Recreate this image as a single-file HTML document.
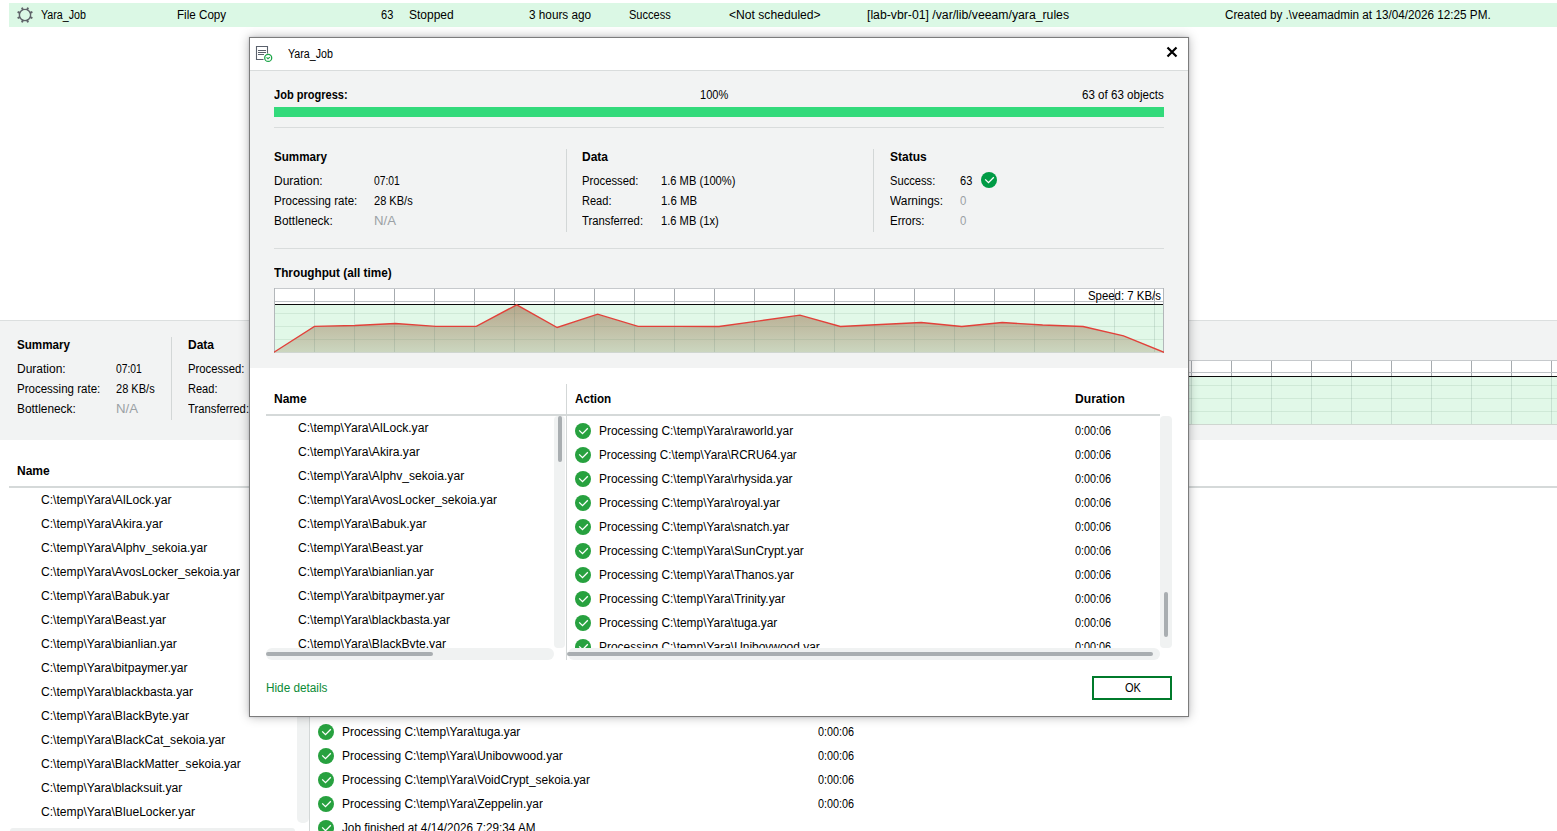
<!DOCTYPE html>
<html><head><meta charset="utf-8"><title>Yara_Job</title>
<style>
html,body{margin:0;padding:0;width:1557px;height:831px;overflow:hidden;background:#fff;position:relative}
body{font-family:"Liberation Sans",sans-serif;font-size:12px;color:#000}
.t,.tb{position:absolute;line-height:14px;white-space:pre;font-size:12px;transform-origin:0 0}
.tb{font-weight:bold}
.r,.a{position:absolute}
.clip{position:absolute;overflow:hidden}
.dlg{position:absolute;left:249px;top:37px;width:938px;height:678px;border:1px solid #7c7c7c;background:#fff;
 box-shadow:0 0 2px rgba(50,60,90,0.2),0 0 10px rgba(0,0,0,0.28)}
</style></head><body>
<div class="r" style="left:9px;top:3px;width:1548px;height:24px;background:#dbf8e5;"></div>
<svg class="a" style="left:17px;top:7px" width="16" height="16" viewBox="0 0 16 16"><circle cx="8" cy="8" r="5.6" fill="none" stroke="#5f6369" stroke-width="1.4"/><line x1="12.80" y1="9.99" x2="15.39" y2="11.06" stroke="#5f6369" stroke-width="2"/><line x1="9.99" y1="12.80" x2="11.06" y2="15.39" stroke="#5f6369" stroke-width="2"/><line x1="6.01" y1="12.80" x2="4.94" y2="15.39" stroke="#5f6369" stroke-width="2"/><line x1="3.20" y1="9.99" x2="0.61" y2="11.06" stroke="#5f6369" stroke-width="2"/><line x1="3.20" y1="6.01" x2="0.61" y2="4.94" stroke="#5f6369" stroke-width="2"/><line x1="6.01" y1="3.20" x2="4.94" y2="0.61" stroke="#5f6369" stroke-width="2"/><line x1="9.99" y1="3.20" x2="11.06" y2="0.61" stroke="#5f6369" stroke-width="2"/><line x1="12.80" y1="6.01" x2="15.39" y2="4.94" stroke="#5f6369" stroke-width="2"/></svg>
<div class="t" style="left:41px;top:8px;transform:scaleX(0.89);">Yara_Job</div>
<div class="t" style="left:177px;top:8px;transform:scaleX(0.97);">File Copy</div>
<div class="t" style="left:381px;top:8px;transform:scaleX(0.92);">63</div>
<div class="t" style="left:409px;top:8px;">Stopped</div>
<div class="t" style="left:529px;top:8px;transform:scaleX(0.98);">3 hours ago</div>
<div class="t" style="left:629px;top:8px;transform:scaleX(0.92);">Success</div>
<div class="t" style="left:729px;top:8px;transform:scaleX(1.01);">&lt;Not scheduled&gt;</div>
<div class="t" style="left:867px;top:8px;transform:scaleX(1.02);">[lab-vbr-01] /var/lib/veeam/yara_rules</div>
<div class="t" style="left:1225px;top:8px;transform:scaleX(0.976);">Created by .\veeamadmin at 13/04/2026 12:25 PM.</div>
<div class="r" style="left:0px;top:320px;width:1557px;height:1px;background:#dcdfdf;"></div>
<div class="r" style="left:0px;top:321px;width:1557px;height:119px;background:#f2f3f3;"></div>
<div class="tb" style="left:17px;top:338px;transform:scaleX(0.97);">Summary</div>
<div class="t" style="left:17px;top:362px;">Duration:</div>
<div class="t" style="left:116px;top:362px;transform:scaleX(0.86);">07:01</div>
<div class="t" style="left:17px;top:382px;transform:scaleX(0.96);">Processing rate:</div>
<div class="t" style="left:116px;top:382px;transform:scaleX(0.92);">28 KB/s</div>
<div class="t" style="left:17px;top:402px;transform:scaleX(0.99);">Bottleneck:</div>
<div class="t" style="left:116px;top:402px;transform:scaleX(1.1);color:#9ba1a5">N/A</div>
<div class="r" style="left:171px;top:337px;width:1px;height:83px;background:#d3d7d7;"></div>
<div class="tb" style="left:188px;top:338px;">Data</div>
<div class="t" style="left:188px;top:362px;transform:scaleX(0.94);">Processed:</div>
<div class="t" style="left:188px;top:382px;transform:scaleX(0.92);">Read:</div>
<div class="t" style="left:188px;top:402px;transform:scaleX(0.94);">Transferred:</div>
<svg class="a" style="left:1151px;top:360px" width="407" height="65" viewBox="0 0 407 65"><rect x="0" y="0" width="407" height="17" fill="#ffffff"/><rect x="0" y="17" width="407" height="48" fill="#e1f8e8"/><rect x="0" y="25" width="407" height="1" fill="rgba(90,130,100,0.13)"/><rect x="0" y="38" width="407" height="1" fill="rgba(90,130,100,0.13)"/><rect x="0" y="51" width="407" height="1" fill="rgba(90,130,100,0.13)"/><rect x="40" y="0" width="1" height="17" fill="#a6abaf"/><rect x="40" y="17" width="1" height="48" fill="rgba(90,120,110,0.18)"/><rect x="80" y="0" width="1" height="17" fill="#a6abaf"/><rect x="80" y="17" width="1" height="48" fill="rgba(90,120,110,0.18)"/><rect x="120" y="0" width="1" height="17" fill="#a6abaf"/><rect x="120" y="17" width="1" height="48" fill="rgba(90,120,110,0.18)"/><rect x="160" y="0" width="1" height="17" fill="#a6abaf"/><rect x="160" y="17" width="1" height="48" fill="rgba(90,120,110,0.18)"/><rect x="200" y="0" width="1" height="17" fill="#a6abaf"/><rect x="200" y="17" width="1" height="48" fill="rgba(90,120,110,0.18)"/><rect x="240" y="0" width="1" height="17" fill="#a6abaf"/><rect x="240" y="17" width="1" height="48" fill="rgba(90,120,110,0.18)"/><rect x="280" y="0" width="1" height="17" fill="#a6abaf"/><rect x="280" y="17" width="1" height="48" fill="rgba(90,120,110,0.18)"/><rect x="320" y="0" width="1" height="17" fill="#a6abaf"/><rect x="320" y="17" width="1" height="48" fill="rgba(90,120,110,0.18)"/><rect x="360" y="0" width="1" height="17" fill="#a6abaf"/><rect x="360" y="17" width="1" height="48" fill="rgba(90,120,110,0.18)"/><rect x="400" y="0" width="1" height="17" fill="#a6abaf"/><rect x="400" y="17" width="1" height="48" fill="rgba(90,120,110,0.18)"/><rect x="0" y="0" width="407" height="1" fill="#c6c9cc"/><rect x="0" y="12" width="407" height="1" fill="#bfc3c7"/><rect x="0" y="16" width="407" height="1" fill="#0c0c0c"/><rect x="0" y="64" width="407" height="1" fill="#cfd6d0"/><rect x="0" y="0" width="1" height="65" fill="#b3b7ba"/><rect x="406" y="0" width="1" height="65" fill="#b3b7ba"/></svg>
<div class="tb" style="left:17px;top:464px;">Name</div>
<div class="r" style="left:9px;top:486px;width:1548px;height:2px;background:#d5d9d9;"></div>
<div class="t" style="left:41px;top:493px;transform:scaleX(1.01);">C:\temp\Yara\AlLock.yar</div>
<div class="t" style="left:41px;top:517px;transform:scaleX(1.01);">C:\temp\Yara\Akira.yar</div>
<div class="t" style="left:41px;top:541px;transform:scaleX(1.01);">C:\temp\Yara\Alphv_sekoia.yar</div>
<div class="t" style="left:41px;top:565px;transform:scaleX(1.01);">C:\temp\Yara\AvosLocker_sekoia.yar</div>
<div class="t" style="left:41px;top:589px;transform:scaleX(1.01);">C:\temp\Yara\Babuk.yar</div>
<div class="t" style="left:41px;top:613px;transform:scaleX(1.01);">C:\temp\Yara\Beast.yar</div>
<div class="t" style="left:41px;top:637px;transform:scaleX(1.01);">C:\temp\Yara\bianlian.yar</div>
<div class="t" style="left:41px;top:661px;transform:scaleX(1.01);">C:\temp\Yara\bitpaymer.yar</div>
<div class="t" style="left:41px;top:685px;transform:scaleX(1.01);">C:\temp\Yara\blackbasta.yar</div>
<div class="t" style="left:41px;top:709px;transform:scaleX(1.01);">C:\temp\Yara\BlackByte.yar</div>
<div class="t" style="left:41px;top:733px;transform:scaleX(1.01);">C:\temp\Yara\BlackCat_sekoia.yar</div>
<div class="t" style="left:41px;top:757px;transform:scaleX(1.01);">C:\temp\Yara\BlackMatter_sekoia.yar</div>
<div class="t" style="left:41px;top:781px;transform:scaleX(1.01);">C:\temp\Yara\blacksuit.yar</div>
<div class="t" style="left:41px;top:805px;transform:scaleX(1.01);">C:\temp\Yara\BlueLocker.yar</div>
<div class="r" style="left:297px;top:488px;width:12px;height:335px;background:#f0f2f2;border-radius:5px"></div>
<div class="r" style="left:309px;top:488px;width:1px;height:343px;background:#d3d7d7;"></div>
<div class="r" style="left:10px;top:828px;width:285px;height:3px;background:#eef0f0;border-radius:3px 3px 0 0"></div>
<svg class="a" style="left:318px;top:724px" width="16" height="16" viewBox="0 0 16 16"><circle cx="8" cy="8" r="8" fill="#27a13f"/><path d="M4.2 7.4 L7.5 10.7 L12.8 5.3" fill="none" stroke="#fff" stroke-width="1.3"/></svg>
<div class="t" style="left:342px;top:725px;transform:scaleX(0.995);">Processing C:\temp\Yara\tuga.yar</div>
<div class="t" style="left:818px;top:725px;transform:scaleX(0.9);">0:00:06</div>
<svg class="a" style="left:318px;top:748px" width="16" height="16" viewBox="0 0 16 16"><circle cx="8" cy="8" r="8" fill="#27a13f"/><path d="M4.2 7.4 L7.5 10.7 L12.8 5.3" fill="none" stroke="#fff" stroke-width="1.3"/></svg>
<div class="t" style="left:342px;top:749px;transform:scaleX(0.995);">Processing C:\temp\Yara\Unibovwood.yar</div>
<div class="t" style="left:818px;top:749px;transform:scaleX(0.9);">0:00:06</div>
<svg class="a" style="left:318px;top:772px" width="16" height="16" viewBox="0 0 16 16"><circle cx="8" cy="8" r="8" fill="#27a13f"/><path d="M4.2 7.4 L7.5 10.7 L12.8 5.3" fill="none" stroke="#fff" stroke-width="1.3"/></svg>
<div class="t" style="left:342px;top:773px;transform:scaleX(0.995);">Processing C:\temp\Yara\VoidCrypt_sekoia.yar</div>
<div class="t" style="left:818px;top:773px;transform:scaleX(0.9);">0:00:06</div>
<svg class="a" style="left:318px;top:796px" width="16" height="16" viewBox="0 0 16 16"><circle cx="8" cy="8" r="8" fill="#27a13f"/><path d="M4.2 7.4 L7.5 10.7 L12.8 5.3" fill="none" stroke="#fff" stroke-width="1.3"/></svg>
<div class="t" style="left:342px;top:797px;transform:scaleX(0.995);">Processing C:\temp\Yara\Zeppelin.yar</div>
<div class="t" style="left:818px;top:797px;transform:scaleX(0.9);">0:00:06</div>
<svg class="a" style="left:318px;top:820px" width="16" height="16" viewBox="0 0 16 16"><circle cx="8" cy="8" r="8" fill="#27a13f"/><path d="M4.2 7.4 L7.5 10.7 L12.8 5.3" fill="none" stroke="#fff" stroke-width="1.3"/></svg>
<div class="t" style="left:342px;top:821px;transform:scaleX(0.977);">Job finished at 4/14/2026 7:29:34 AM</div>
<div class="dlg"></div>
<div class="r" style="left:250px;top:38px;width:938px;height:32px;background:#ffffff;"></div>
<div class="r" style="left:250px;top:70px;width:938px;height:1px;background:#d9dcdc;"></div>
<div class="r" style="left:250px;top:71px;width:938px;height:297px;background:#f2f3f3;"></div>
<div class="r" style="left:250px;top:368px;width:938px;height:348px;background:#ffffff;"></div>
<svg class="a" style="left:255px;top:44px" width="20" height="20" viewBox="0 0 20 20"><path d="M8 15.5 H1.5 V2.5 H12.5 V9" fill="none" stroke="#5a616c" stroke-width="1.1" stroke-linejoin="miter" stroke-linecap="square"/><path d="M3 6.5 H11 M3 8.5 H11 M3 10.5 H9" stroke="#5a616c" stroke-width="1"/><circle cx="13.2" cy="13.9" r="3.5" fill="#fff" stroke="#1ea64a" stroke-width="1.3"/><path d="M11.5 13.3 L13 14.7 L14.9 13.1" fill="none" stroke="#1ea64a" stroke-width="1.1"/></svg>
<div class="t" style="left:288px;top:47px;transform:scaleX(0.89);">Yara_Job</div>
<svg class="a" style="left:1165px;top:45px" width="14" height="14" viewBox="0 0 14 14"><path d="M2.5 2.5 L11.5 11.5 M11.5 2.5 L2.5 11.5" stroke="#000" stroke-width="2.2"/></svg>
<div class="tb" style="left:274px;top:88px;transform:scaleX(0.92);">Job progress:</div>
<div class="t" style="left:700px;top:88px;transform:scaleX(0.92);">100%</div>
<div class="t" style="left:1082px;top:88px;transform:scaleX(0.965);">63 of 63 objects</div>
<div class="r" style="left:274px;top:107px;width:890px;height:10px;background:#33da7b;"></div>
<div class="r" style="left:274px;top:127px;width:890px;height:1px;background:#d9dcdc;"></div>
<div class="tb" style="left:274px;top:150px;transform:scaleX(0.97);">Summary</div>
<div class="t" style="left:274px;top:174px;">Duration:</div>
<div class="t" style="left:374px;top:174px;transform:scaleX(0.86);">07:01</div>
<div class="t" style="left:274px;top:194px;transform:scaleX(0.96);">Processing rate:</div>
<div class="t" style="left:374px;top:194px;transform:scaleX(0.92);">28 KB/s</div>
<div class="t" style="left:274px;top:214px;transform:scaleX(0.99);">Bottleneck:</div>
<div class="t" style="left:374px;top:214px;transform:scaleX(1.1);color:#9ba1a5">N/A</div>
<div class="r" style="left:566px;top:149px;width:1px;height:83px;background:#d3d7d7;"></div>
<div class="tb" style="left:582px;top:150px;">Data</div>
<div class="t" style="left:582px;top:174px;transform:scaleX(0.94);">Processed:</div>
<div class="t" style="left:661px;top:174px;transform:scaleX(0.93);">1.6 MB (100%)</div>
<div class="t" style="left:582px;top:194px;transform:scaleX(0.92);">Read:</div>
<div class="t" style="left:661px;top:194px;transform:scaleX(0.95);">1.6 MB</div>
<div class="t" style="left:582px;top:214px;transform:scaleX(0.94);">Transferred:</div>
<div class="t" style="left:661px;top:214px;transform:scaleX(0.93);">1.6 MB (1x)</div>
<div class="r" style="left:873px;top:149px;width:1px;height:83px;background:#d3d7d7;"></div>
<div class="tb" style="left:890px;top:150px;">Status</div>
<div class="t" style="left:890px;top:174px;transform:scaleX(0.93);">Success:</div>
<div class="t" style="left:960px;top:174px;transform:scaleX(0.92);">63</div>
<div class="t" style="left:890px;top:194px;transform:scaleX(0.99);">Warnings:</div>
<div class="t" style="left:960px;top:194px;transform:scaleX(0.95);color:#9ba1a5">0</div>
<div class="t" style="left:890px;top:214px;transform:scaleX(0.96);">Errors:</div>
<div class="t" style="left:960px;top:214px;transform:scaleX(0.95);color:#9ba1a5">0</div>
<svg class="a" style="left:981px;top:172px" width="16" height="16" viewBox="0 0 16 16"><circle cx="8" cy="8" r="8" fill="#009b45"/><path d="M4.2 7.4 L7.5 10.7 L12.8 5.3" fill="none" stroke="#fff" stroke-width="1.3"/></svg>
<div class="r" style="left:274px;top:248px;width:890px;height:1px;background:#d9dcdc;"></div>
<div class="tb" style="left:274px;top:266px;transform:scaleX(0.98);">Throughput (all time)</div>
<svg class="a" style="left:274px;top:288px" width="890" height="65" viewBox="0 0 890 65"><rect x="0" y="0" width="890" height="17" fill="#ffffff"/><rect x="0" y="17" width="890" height="48" fill="#e1f8e8"/><defs><linearGradient id="fg" x1="0" y1="16" x2="0" y2="64" gradientUnits="userSpaceOnUse"><stop offset="0" stop-color="#b6a68a"/><stop offset="1" stop-color="#cbd6bf"/></linearGradient></defs><polygon points="0.00,64.30 40.45,38.40 80.91,37.50 121.36,35.50 161.82,38.40 202.27,38.30 242.73,16.80 283.18,39.50 323.64,26.20 364.09,38.40 404.55,38.40 445.00,38.50 485.45,32.90 525.91,27.20 566.36,38.50 606.82,36.50 647.27,34.50 687.73,38.50 728.18,34.50 768.64,37.00 809.09,38.50 849.55,47.80 890.00,64.30 890.00,64.5 0,64.5" fill="url(#fg)"/><rect x="0" y="25" width="890" height="1" fill="rgba(90,130,100,0.13)"/><rect x="0" y="38" width="890" height="1" fill="rgba(90,130,100,0.13)"/><rect x="0" y="51" width="890" height="1" fill="rgba(90,130,100,0.13)"/><rect x="40" y="0" width="1" height="17" fill="#a6abaf"/><rect x="40" y="17" width="1" height="48" fill="rgba(90,120,110,0.18)"/><rect x="80" y="0" width="1" height="17" fill="#a6abaf"/><rect x="80" y="17" width="1" height="48" fill="rgba(90,120,110,0.18)"/><rect x="120" y="0" width="1" height="17" fill="#a6abaf"/><rect x="120" y="17" width="1" height="48" fill="rgba(90,120,110,0.18)"/><rect x="160" y="0" width="1" height="17" fill="#a6abaf"/><rect x="160" y="17" width="1" height="48" fill="rgba(90,120,110,0.18)"/><rect x="200" y="0" width="1" height="17" fill="#a6abaf"/><rect x="200" y="17" width="1" height="48" fill="rgba(90,120,110,0.18)"/><rect x="240" y="0" width="1" height="17" fill="#a6abaf"/><rect x="240" y="17" width="1" height="48" fill="rgba(90,120,110,0.18)"/><rect x="280" y="0" width="1" height="17" fill="#a6abaf"/><rect x="280" y="17" width="1" height="48" fill="rgba(90,120,110,0.18)"/><rect x="320" y="0" width="1" height="17" fill="#a6abaf"/><rect x="320" y="17" width="1" height="48" fill="rgba(90,120,110,0.18)"/><rect x="360" y="0" width="1" height="17" fill="#a6abaf"/><rect x="360" y="17" width="1" height="48" fill="rgba(90,120,110,0.18)"/><rect x="400" y="0" width="1" height="17" fill="#a6abaf"/><rect x="400" y="17" width="1" height="48" fill="rgba(90,120,110,0.18)"/><rect x="440" y="0" width="1" height="17" fill="#a6abaf"/><rect x="440" y="17" width="1" height="48" fill="rgba(90,120,110,0.18)"/><rect x="480" y="0" width="1" height="17" fill="#a6abaf"/><rect x="480" y="17" width="1" height="48" fill="rgba(90,120,110,0.18)"/><rect x="520" y="0" width="1" height="17" fill="#a6abaf"/><rect x="520" y="17" width="1" height="48" fill="rgba(90,120,110,0.18)"/><rect x="560" y="0" width="1" height="17" fill="#a6abaf"/><rect x="560" y="17" width="1" height="48" fill="rgba(90,120,110,0.18)"/><rect x="600" y="0" width="1" height="17" fill="#a6abaf"/><rect x="600" y="17" width="1" height="48" fill="rgba(90,120,110,0.18)"/><rect x="640" y="0" width="1" height="17" fill="#a6abaf"/><rect x="640" y="17" width="1" height="48" fill="rgba(90,120,110,0.18)"/><rect x="680" y="0" width="1" height="17" fill="#a6abaf"/><rect x="680" y="17" width="1" height="48" fill="rgba(90,120,110,0.18)"/><rect x="720" y="0" width="1" height="17" fill="#a6abaf"/><rect x="720" y="17" width="1" height="48" fill="rgba(90,120,110,0.18)"/><rect x="760" y="0" width="1" height="17" fill="#a6abaf"/><rect x="760" y="17" width="1" height="48" fill="rgba(90,120,110,0.18)"/><rect x="800" y="0" width="1" height="17" fill="#a6abaf"/><rect x="800" y="17" width="1" height="48" fill="rgba(90,120,110,0.18)"/><rect x="840" y="0" width="1" height="17" fill="#a6abaf"/><rect x="840" y="17" width="1" height="48" fill="rgba(90,120,110,0.18)"/><rect x="880" y="0" width="1" height="17" fill="#a6abaf"/><rect x="880" y="17" width="1" height="48" fill="rgba(90,120,110,0.18)"/><rect x="0" y="0" width="890" height="1" fill="#c6c9cc"/><rect x="0" y="13" width="890" height="1" fill="#bfc3c7"/><rect x="0" y="16" width="890" height="1" fill="#0c0c0c"/><rect x="0" y="64" width="890" height="1" fill="#cfd6d0"/><rect x="0" y="0" width="1" height="65" fill="#b3b7ba"/><rect x="889" y="0" width="1" height="65" fill="#b3b7ba"/><polyline points="0.00,64.30 40.45,38.40 80.91,37.50 121.36,35.50 161.82,38.40 202.27,38.30 242.73,16.80 283.18,39.50 323.64,26.20 364.09,38.40 404.55,38.40 445.00,38.50 485.45,32.90 525.91,27.20 566.36,38.50 606.82,36.50 647.27,34.50 687.73,38.50 728.18,34.50 768.64,37.00 809.09,38.50 849.55,47.80 890.00,64.30" fill="none" stroke="#e2413a" stroke-width="1.35" stroke-linejoin="miter"/></svg>
<div class="t" style="left:1088px;top:289px;transform:scaleX(0.95);background:transparent">Speed: 7 KB/s</div>
<div class="tb" style="left:274px;top:392px;">Name</div>
<div class="tb" style="left:575px;top:392px;transform:scaleX(0.97);">Action</div>
<div class="tb" style="left:1075px;top:392px;transform:scaleX(1.01);">Duration</div>
<div class="r" style="left:266px;top:414px;width:894px;height:2px;background:#d5d9d9;"></div>
<div class="r" style="left:566px;top:384px;width:1px;height:276px;background:#d3d7d7;"></div>
<div class="clip" style="left:266px;top:416px;width:288px;height:232px">
<div class="t" style="left:32px;top:5px;transform:scaleX(1.01);">C:\temp\Yara\AlLock.yar</div>
<div class="t" style="left:32px;top:29px;transform:scaleX(1.01);">C:\temp\Yara\Akira.yar</div>
<div class="t" style="left:32px;top:53px;transform:scaleX(1.01);">C:\temp\Yara\Alphv_sekoia.yar</div>
<div class="t" style="left:32px;top:77px;transform:scaleX(1.01);">C:\temp\Yara\AvosLocker_sekoia.yar</div>
<div class="t" style="left:32px;top:101px;transform:scaleX(1.01);">C:\temp\Yara\Babuk.yar</div>
<div class="t" style="left:32px;top:125px;transform:scaleX(1.01);">C:\temp\Yara\Beast.yar</div>
<div class="t" style="left:32px;top:149px;transform:scaleX(1.01);">C:\temp\Yara\bianlian.yar</div>
<div class="t" style="left:32px;top:173px;transform:scaleX(1.01);">C:\temp\Yara\bitpaymer.yar</div>
<div class="t" style="left:32px;top:197px;transform:scaleX(1.01);">C:\temp\Yara\blackbasta.yar</div>
<div class="t" style="left:32px;top:221px;transform:scaleX(1.01);">C:\temp\Yara\BlackByte.yar</div>
</div>
<div class="clip" style="left:567px;top:416px;width:593px;height:232px">
<svg class="a" style="left:8px;top:7px" width="16" height="16" viewBox="0 0 16 16"><circle cx="8" cy="8" r="8" fill="#27a13f"/><path d="M4.2 7.4 L7.5 10.7 L12.8 5.3" fill="none" stroke="#fff" stroke-width="1.3"/></svg>
<div class="t" style="left:32px;top:8px;transform:scaleX(0.995);">Processing C:\temp\Yara\raworld.yar</div>
<div class="t" style="left:508px;top:8px;transform:scaleX(0.9);">0:00:06</div>
<svg class="a" style="left:8px;top:31px" width="16" height="16" viewBox="0 0 16 16"><circle cx="8" cy="8" r="8" fill="#27a13f"/><path d="M4.2 7.4 L7.5 10.7 L12.8 5.3" fill="none" stroke="#fff" stroke-width="1.3"/></svg>
<div class="t" style="left:32px;top:32px;transform:scaleX(0.97);">Processing C:\temp\Yara\RCRU64.yar</div>
<div class="t" style="left:508px;top:32px;transform:scaleX(0.9);">0:00:06</div>
<svg class="a" style="left:8px;top:55px" width="16" height="16" viewBox="0 0 16 16"><circle cx="8" cy="8" r="8" fill="#27a13f"/><path d="M4.2 7.4 L7.5 10.7 L12.8 5.3" fill="none" stroke="#fff" stroke-width="1.3"/></svg>
<div class="t" style="left:32px;top:56px;transform:scaleX(0.995);">Processing C:\temp\Yara\rhysida.yar</div>
<div class="t" style="left:508px;top:56px;transform:scaleX(0.9);">0:00:06</div>
<svg class="a" style="left:8px;top:79px" width="16" height="16" viewBox="0 0 16 16"><circle cx="8" cy="8" r="8" fill="#27a13f"/><path d="M4.2 7.4 L7.5 10.7 L12.8 5.3" fill="none" stroke="#fff" stroke-width="1.3"/></svg>
<div class="t" style="left:32px;top:80px;transform:scaleX(0.995);">Processing C:\temp\Yara\royal.yar</div>
<div class="t" style="left:508px;top:80px;transform:scaleX(0.9);">0:00:06</div>
<svg class="a" style="left:8px;top:103px" width="16" height="16" viewBox="0 0 16 16"><circle cx="8" cy="8" r="8" fill="#27a13f"/><path d="M4.2 7.4 L7.5 10.7 L12.8 5.3" fill="none" stroke="#fff" stroke-width="1.3"/></svg>
<div class="t" style="left:32px;top:104px;transform:scaleX(0.995);">Processing C:\temp\Yara\snatch.yar</div>
<div class="t" style="left:508px;top:104px;transform:scaleX(0.9);">0:00:06</div>
<svg class="a" style="left:8px;top:127px" width="16" height="16" viewBox="0 0 16 16"><circle cx="8" cy="8" r="8" fill="#27a13f"/><path d="M4.2 7.4 L7.5 10.7 L12.8 5.3" fill="none" stroke="#fff" stroke-width="1.3"/></svg>
<div class="t" style="left:32px;top:128px;transform:scaleX(0.995);">Processing C:\temp\Yara\SunCrypt.yar</div>
<div class="t" style="left:508px;top:128px;transform:scaleX(0.9);">0:00:06</div>
<svg class="a" style="left:8px;top:151px" width="16" height="16" viewBox="0 0 16 16"><circle cx="8" cy="8" r="8" fill="#27a13f"/><path d="M4.2 7.4 L7.5 10.7 L12.8 5.3" fill="none" stroke="#fff" stroke-width="1.3"/></svg>
<div class="t" style="left:32px;top:152px;transform:scaleX(0.995);">Processing C:\temp\Yara\Thanos.yar</div>
<div class="t" style="left:508px;top:152px;transform:scaleX(0.9);">0:00:06</div>
<svg class="a" style="left:8px;top:175px" width="16" height="16" viewBox="0 0 16 16"><circle cx="8" cy="8" r="8" fill="#27a13f"/><path d="M4.2 7.4 L7.5 10.7 L12.8 5.3" fill="none" stroke="#fff" stroke-width="1.3"/></svg>
<div class="t" style="left:32px;top:176px;transform:scaleX(0.995);">Processing C:\temp\Yara\Trinity.yar</div>
<div class="t" style="left:508px;top:176px;transform:scaleX(0.9);">0:00:06</div>
<svg class="a" style="left:8px;top:199px" width="16" height="16" viewBox="0 0 16 16"><circle cx="8" cy="8" r="8" fill="#27a13f"/><path d="M4.2 7.4 L7.5 10.7 L12.8 5.3" fill="none" stroke="#fff" stroke-width="1.3"/></svg>
<div class="t" style="left:32px;top:200px;transform:scaleX(0.995);">Processing C:\temp\Yara\tuga.yar</div>
<div class="t" style="left:508px;top:200px;transform:scaleX(0.9);">0:00:06</div>
<svg class="a" style="left:8px;top:223px" width="16" height="16" viewBox="0 0 16 16"><circle cx="8" cy="8" r="8" fill="#27a13f"/><path d="M4.2 7.4 L7.5 10.7 L12.8 5.3" fill="none" stroke="#fff" stroke-width="1.3"/></svg>
<div class="t" style="left:32px;top:224px;transform:scaleX(0.995);">Processing C:\temp\Yara\Unibovwood.yar</div>
<div class="t" style="left:508px;top:224px;transform:scaleX(0.9);">0:00:06</div>
</div>
<div class="r" style="left:554px;top:416px;width:11px;height:232px;background:#f0f2f2;border-radius:4px"></div>
<div class="r" style="left:558px;top:416px;width:4px;height:46px;background:#a9aeb1;border-radius:2px"></div>
<div class="r" style="left:266px;top:648px;width:288px;height:12px;background:#f0f2f2;border-radius:6px"></div>
<div class="r" style="left:266px;top:652px;width:167px;height:4px;background:#a9aeb1;border-radius:2px"></div>
<div class="r" style="left:1160px;top:416px;width:12px;height:232px;background:#f0f2f2;border-radius:4px"></div>
<div class="r" style="left:1164px;top:592px;width:4px;height:45px;background:#a9aeb1;border-radius:2px"></div>
<div class="r" style="left:568px;top:648px;width:592px;height:12px;background:#f0f2f2;border-radius:6px"></div>
<div class="r" style="left:567px;top:652px;width:586px;height:4px;background:#a9aeb1;border-radius:2px"></div>
<div class="t" style="left:266px;top:681px;transform:scaleX(0.98);color:#0b8a36">Hide details</div>
<div class="r" style="left:1092px;top:676px;width:76px;height:20px;border:2px solid #007a2b;background:#fff"></div>
<div class="t" style="left:1125px;top:681px;transform:scaleX(0.92);">OK</div>
</body></html>
